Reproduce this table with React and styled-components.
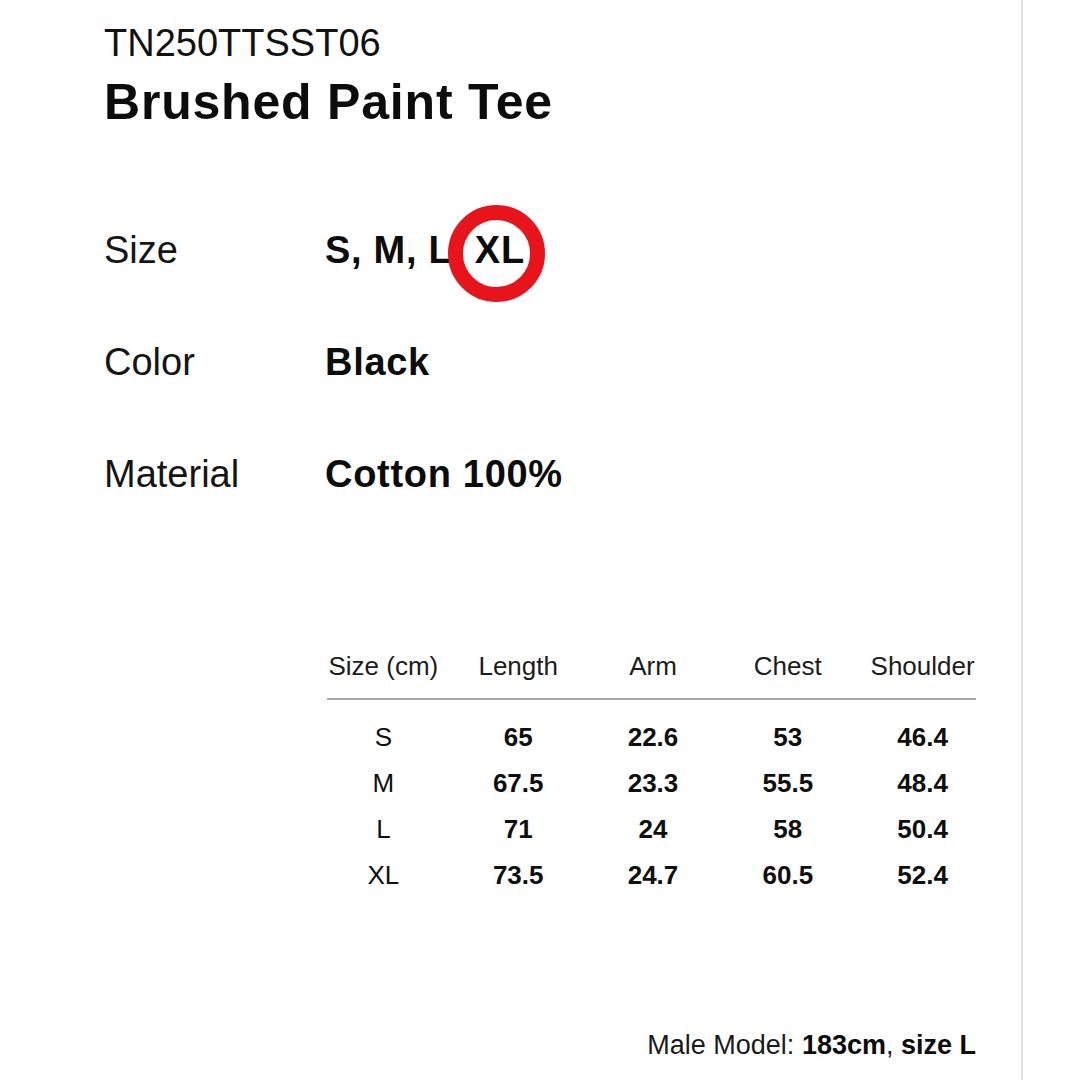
import React from 'react'
import styled, { createGlobalStyle } from 'styled-components'

const GlobalStyle = createGlobalStyle`
  html, body {
    margin: 0;
    padding: 0;
    background: #fff;
  }
  body {
    font-family: "Liberation Sans", Arial, Helvetica, sans-serif;
    color: #111;
  }
`

const rows = [
  ['S', '65', '22.6', '53', '46.4'],
  ['M', '67.5', '23.3', '55.5', '48.4'],
  ['L', '71', '24', '58', '50.4'],
  ['XL', '73.5', '24.7', '60.5', '52.4'],
]

const headers = ['Size (cm)', 'Length', 'Arm', 'Chest', 'Shoulder']

function App() {
  return (
    <>
      <GlobalStyle />
      <Page>
        <Main>
          <Code>TN250TTSST06</Code>
          <Title>Brushed Paint Tee</Title>

          <Specs>
            <SpecRow>
              <Label>Size</Label>
              <Value>
                S, M, L, <Circled>XL</Circled>
              </Value>
            </SpecRow>
            <SpecRow>
              <Label>Color</Label>
              <Value>Black</Value>
            </SpecRow>
            <SpecRow>
              <Label>Material</Label>
              <Value>Cotton 100%</Value>
            </SpecRow>
          </Specs>

          <SizeTable>
            <HeaderRow>
              {headers.map((h) => (
                <HeadCell key={h}>{h}</HeadCell>
              ))}
            </HeaderRow>
            <Rule />
            {rows.map((r) => (
              <BodyRow key={r[0]}>
                {r.map((v, i) => (
                  <Cell key={i} $first={i === 0}>
                    {v}
                  </Cell>
                ))}
              </BodyRow>
            ))}
            <Footer>
              Male Model: <b>183cm</b>, <b>size L</b>
            </Footer>
          </SizeTable>
        </Main>
        <Divider />
        <Side />
      </Page>
    </>
  )
}

export default App

const Page = styled.div`
  width: 1080px;
  height: 1080px;
  display: flex;
  overflow: hidden;
  background: #fff;
`

const Main = styled.div`
  width: 1021px;
  padding: 24px 0 0 104px;
  box-sizing: border-box;
`

const Divider = styled.div`
  width: 2px;
  background: #e2e2e2;
`

const Side = styled.div`
  flex: 1;
  background: #fff;
`

const Code = styled.div`
  font-size: 38px;
  line-height: 1;
  color: #111;
`

const Title = styled.h1`
  margin: 15px 0 0;
  font-size: 50px;
  line-height: 1;
  font-weight: 700;
  letter-spacing: 0.8px;
  color: #0c0c0c;
`

const Specs = styled.div`
  margin-top: 104px;
  display: flex;
  flex-direction: column;
  gap: 74px;
`

const SpecRow = styled.div`
  display: grid;
  grid-template-columns: 221px auto;
  font-size: 38px;
  line-height: 1;
`

const Label = styled.div`
  color: #151515;
`

const Value = styled.div`
  font-weight: 700;
  letter-spacing: 0.7px;
  color: #0c0c0c;
`

const Circled = styled.span`
  position: relative;
  display: inline-block;

  &::after {
    content: '';
    position: absolute;
    left: calc(50% - 51.5px);
    top: -26px;
    width: 97px;
    height: 97px;
    box-sizing: border-box;
    border: 15px solid #e8141c;
    border-radius: 50%;
  }
`

const SizeTable = styled.div`
  margin: 160px 0 0 212px;
  width: 674px;
`

const HeaderRow = styled.div`
  display: grid;
  grid-template-columns: repeat(5, 1fr);
  font-size: 26px;
  line-height: 1;
  color: #1c1c1c;
`

const HeadCell = styled.div`
  text-align: center;
  white-space: nowrap;
`

const Rule = styled.div`
  height: 2px;
  background: #a9a9a9;
  margin: 19px 14px 14px 11px;
`

const BodyRow = styled.div`
  display: grid;
  grid-template-columns: repeat(5, 1fr);
  font-size: 26px;
  line-height: 46px;
`

const Cell = styled.div`
  text-align: center;
  font-weight: ${(p) => (p.$first ? 400 : 700)};
  color: #0f0f0f;
`

const Footer = styled.div`
  margin: 134px 14px 0 0;
  text-align: right;
  font-size: 27px;
  line-height: 1;
  color: #1a1a1a;

  b {
    font-weight: 700;
    color: #0c0c0c;
  }
`
